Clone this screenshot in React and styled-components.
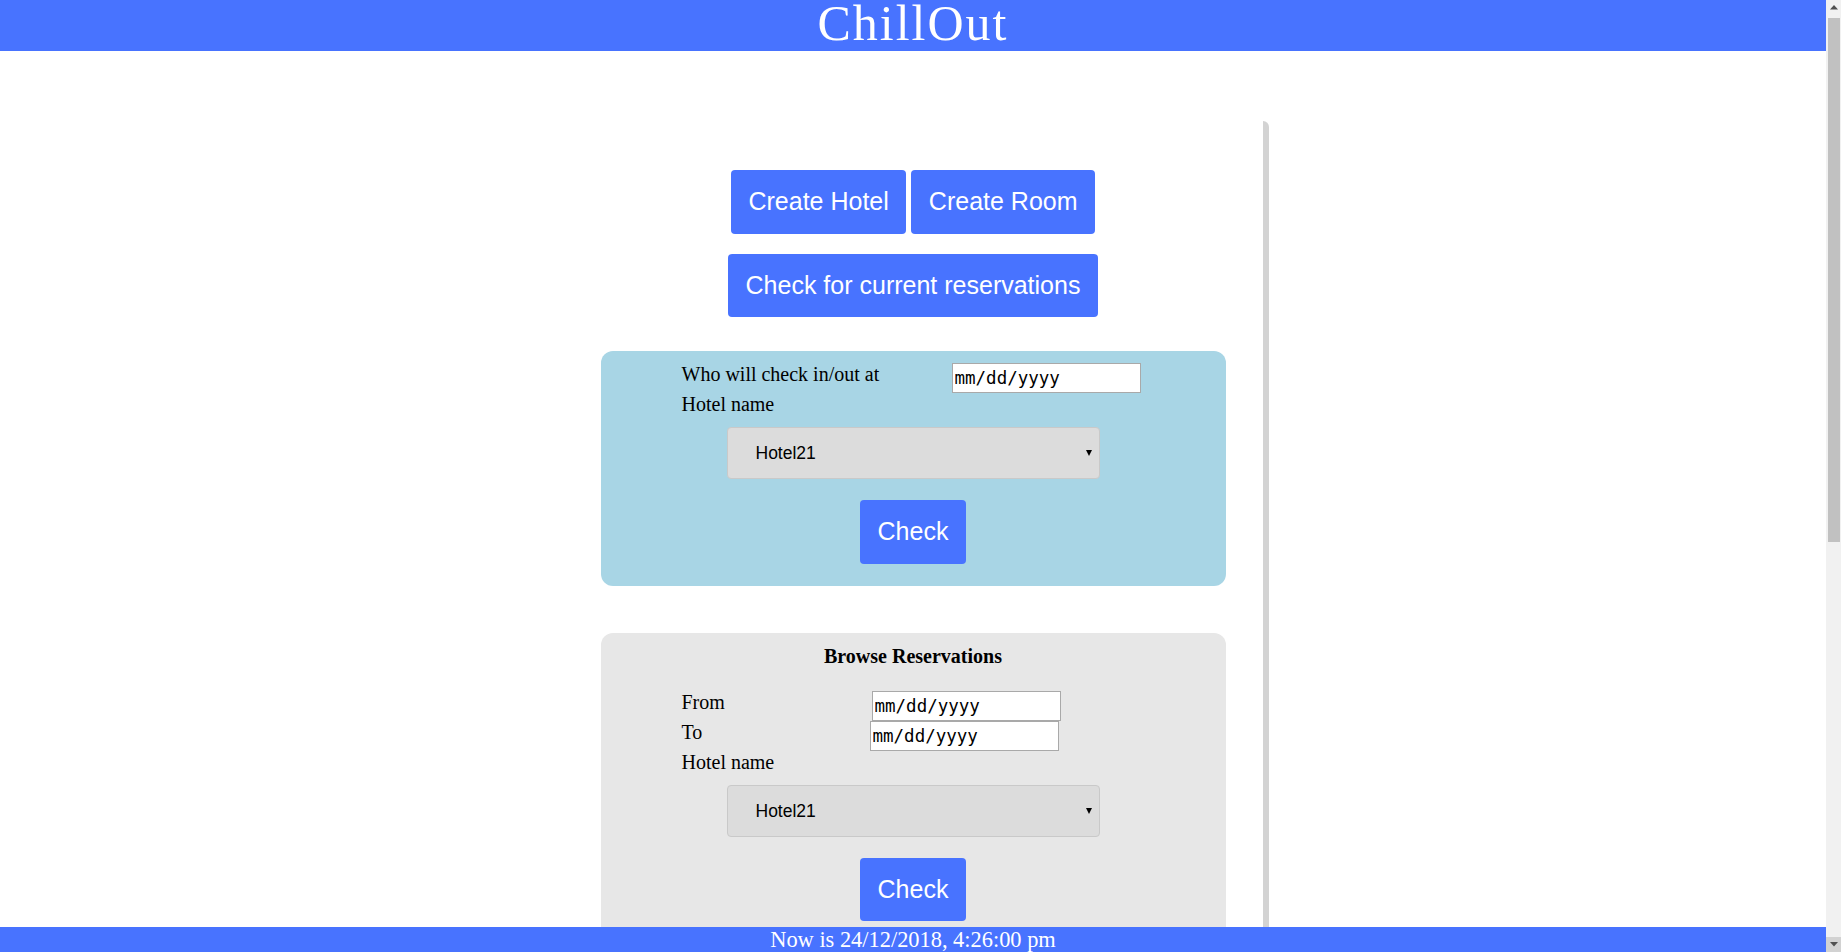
import React from "react"
import styled, { createGlobalStyle } from "styled-components"

const blue = "#4873ff"

const GlobalStyle = createGlobalStyle`
  body {
    margin: 0;
    background: #ffffff;
    font-family: "Liberation Serif", "Times New Roman", serif;
    color: #000000;
  }
`

const Page = styled.div`
  margin-right: 15px;
`

const Header = styled.header`
  height: 51px;
  background-color: ${blue};
  text-align: center;
`

const Title = styled.h1`
  margin: 0;
  font-size: 50px;
  font-weight: normal;
  line-height: 47px;
  letter-spacing: 2px;
  color: #ffffff;
`

const Main = styled.main`
  width: 712px;
  min-height: 1554px;
  margin: 70px auto 0;
  padding-top: 49px;
  box-sizing: border-box;
  border-left: 6px solid transparent;
  border-right: 6px solid #d3d3d3;
  border-top-right-radius: 6px;
`

const ButtonRow = styled.div`
  display: flex;
  justify-content: center;
  gap: 5px;
  margin-bottom: ${({ gap }) => gap || 0}px;
`

const Button = styled.button`
  padding: 17px 17.5px;
  border: none;
  border-radius: 4px;
  background-color: ${blue};
  color: #ffffff;
  font-family: "Liberation Sans", Arial, sans-serif;
  font-size: 25px;
  line-height: 29.6px;
  cursor: pointer;
`

const Panel = styled.section`
  width: 625px;
  margin: ${({ top }) => top}px auto 0;
  padding: 12px 0 22px;
  box-sizing: border-box;
  border-radius: 12px;
  background-color: ${({ tone }) => tone};
`

const PanelTitle = styled.div`
  margin-bottom: 23px;
  text-align: center;
  font-size: 20px;
  font-weight: bold;
  line-height: 23px;
`

const Row = styled.div`
  display: flex;
  align-items: flex-start;
  padding-left: 81px;
`

const Label = styled.label`
  display: block;
  width: ${({ width }) => (width ? `${width}px` : "auto")};
  padding-left: ${({ inset }) => (inset ? "81px" : 0)};
  font-size: 20px;
  line-height: 23px;
`

const DateField = styled.input`
  width: 189px;
  height: 30px;
  box-sizing: border-box;
  margin: 0;
  padding: 0 2px;
  border: 1px solid #a9a9a9;
  background: #ffffff;
  font-family: "DejaVu Sans Mono", monospace;
  font-size: 17.5px;
  color: #000000;
  outline: none;
`

const SelectWrap = styled.div`
  position: relative;
  width: 373px;
  margin: 11px auto 0;

  &::after {
    content: "";
    position: absolute;
    right: 8px;
    top: 23px;
    border-left: 3px solid transparent;
    border-right: 3px solid transparent;
    border-top: 6px solid #000000;
    pointer-events: none;
  }
`

const Select = styled.select`
  width: 100%;
  height: 52px;
  padding: 0 0 0 28px;
  border: 1px solid #c9c9c9;
  border-radius: 4px;
  background-color: #dcdcdc;
  font-family: "Liberation Sans", Arial, sans-serif;
  font-size: 17.5px;
  color: #000000;
  appearance: none;
  -webkit-appearance: none;
  outline: none;
`

const CheckRow = styled.div`
  display: flex;
  justify-content: center;
  margin-top: ${({ top }) => top}px;
`

const Footer = styled.footer`
  position: fixed;
  left: 0;
  right: 15px;
  bottom: 0;
  background-color: ${blue};
  color: #ffffff;
  text-align: center;
  font-size: 22.4px;
  line-height: 25.5px;
`

/* window scrollbar as it shows in the screenshot */
const ScrollTrack = styled.div`
  position: fixed;
  top: 0;
  right: 0;
  width: 15px;
  height: 100vh;
  display: flex;
  flex-direction: column;
  background: #f1f1f1;
`

const ScrollButton = styled.div`
  height: 15px;
  flex: none;
  display: flex;
  align-items: center;
  justify-content: center;
  background: ${({ pressed }) => (pressed ? "#d2d2d2" : "#f1f1f1")};
`

const ScrollGutter = styled.div`
  flex: 1;
  padding: 3px 1px 0 2px;
`

const ScrollThumb = styled.div`
  height: 524px;
  background: #c1c1c1;
`

const Arrow = ({ down }) => (
  <svg width="8" height="5" viewBox="0 0 8 5">
    <polygon points={down ? "0,0 8,0 4,4.5" : "0,4.5 8,4.5 4,0"} fill="#505050" />
  </svg>
)

const HotelSelect = () => (
  <SelectWrap>
    <Select defaultValue="Hotel21">
      <option>Hotel21</option>
    </Select>
  </SelectWrap>
)

const DateInput = () => <DateField type="text" readOnly value="mm/dd/yyyy" />

const App = () => {
  return (
    <>
      <GlobalStyle />
      <Page>
        <Header>
          <Title>ChillOut</Title>
        </Header>
        <Main>
          <ButtonRow gap={20}>
            <Button>Create Hotel</Button>
            <Button>Create Room</Button>
          </ButtonRow>
          <ButtonRow>
            <Button>Check for current reservations</Button>
          </ButtonRow>

          <Panel top={34} tone="#a8d5e5">
            <Row>
              <Label width={270}>Who will check in/out at</Label>
              <DateInput />
            </Row>
            <Label inset>Hotel name</Label>
            <HotelSelect />
            <CheckRow top={21}>
              <Button>Check</Button>
            </CheckRow>
          </Panel>

          <Panel top={47} tone="#e7e7e7">
            <PanelTitle>Browse Reservations</PanelTitle>
            <Row>
              <Label width={190}>From</Label>
              <DateInput />
            </Row>
            <Row>
              <Label width={188}>To</Label>
              <DateInput />
            </Row>
            <Label inset>Hotel name</Label>
            <HotelSelect />
            <CheckRow top={21}>
              <Button>Check</Button>
            </CheckRow>
          </Panel>
        </Main>
        <Footer>Now is 24/12/2018, 4:26:00 pm</Footer>
      </Page>
      <ScrollTrack>
        <ScrollButton>
          <Arrow />
        </ScrollButton>
        <ScrollGutter>
          <ScrollThumb />
        </ScrollGutter>
        <ScrollButton pressed>
          <Arrow down />
        </ScrollButton>
      </ScrollTrack>
    </>
  )
}

export default App
